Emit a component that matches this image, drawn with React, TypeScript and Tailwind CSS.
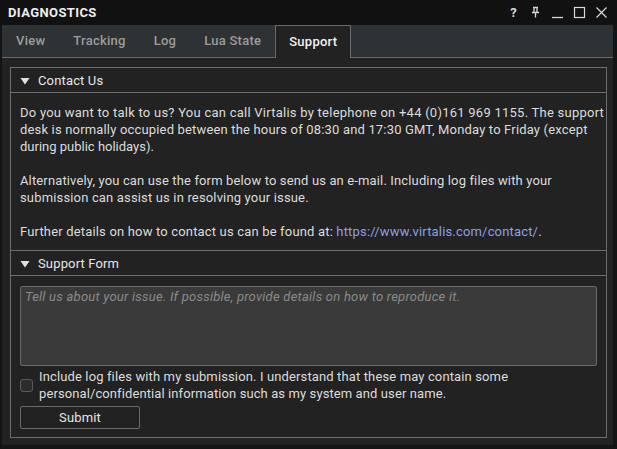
import React from "react";

function TitleIcons() {
  return (
    <div className="flex items-center gap-[9px] text-[#d8d8d8]">
      <span className="w-[13px] text-center font-bold text-[13px] leading-none">?</span>
      <svg width="13" height="13" viewBox="0 0 13 13" fill="none" stroke="#d8d8d8" strokeWidth="1.3">
        <path d="M4 1.5h5M5 1.5v5M8 1.5v5M3 6.5h7M6.5 6.5v5" />
      </svg>
      <svg width="13" height="13" viewBox="0 0 13 13" fill="none" stroke="#d8d8d8" strokeWidth="1.3">
        <path d="M1 11.5h11" />
      </svg>
      <svg width="13" height="13" viewBox="0 0 13 13" fill="none" stroke="#d8d8d8" strokeWidth="1.2">
        <rect x="1.5" y="1.5" width="10" height="10" />
      </svg>
      <svg width="13" height="13" viewBox="0 0 13 13" fill="none" stroke="#d8d8d8" strokeWidth="1.2">
        <path d="M1.5 1.5l10 10M11.5 1.5l-10 10" />
      </svg>
    </div>
  );
}

function Triangle() {
  return (
    <svg width="10" height="8" viewBox="0 0 10 8">
      <path d="M0.5 1h9L5 7.5z" fill="#e0e0e0" />
    </svg>
  );
}

export default function App() {
  const tabs = ["View", "Tracking", "Log", "Lua State"];
  return (
    <div className="w-[617px] h-[449px] bg-[#141414] flex flex-col font-['Roboto',sans-serif] text-[13px] tracking-[0.15px] text-[#dcdcdc] overflow-hidden">
      <div className="h-[25px] shrink-0 flex items-center justify-between pl-[8px] pr-[9px] bg-[#111111]">
        <span className="font-bold text-[13px] tracking-[0.4px] text-[#eeeeee]">DIAGNOSTICS</span>
        <TitleIcons />
      </div>
      <div className="flex-1 flex flex-col pl-[2px] pr-[4px] pb-[4px]">
        <div className="h-[33px] shrink-0 flex items-end bg-[#2e3234] border-b border-[#6a6a6a] tracking-[0.25px]">
          {tabs.map((t) => (
            <div key={t} className="h-[32px] flex items-center px-[14px] font-medium text-[#9c9c9c]">
              {t}
            </div>
          ))}
          <div className="h-[33px] -mb-[1px] flex items-center px-[13px] font-medium text-[#f2f2f2] bg-[#222222] border border-b-0 border-[#6a6a6a]">
            Support
          </div>
        </div>
        <div className="flex-1 bg-[#222222] pt-[9px] pl-[8px] pr-[6px] pb-[7px] flex flex-col">
          <div className="flex-1 border border-[#6e6e6e] flex flex-col">
            <div className="h-[25px] shrink-0 flex items-center gap-[8px] pl-[9px] pt-[2px] border-b border-[#6e6e6e]">
              <Triangle />
              <span className="text-[#e6e6e6]">Contact Us</span>
            </div>
            <div className="pl-[9px] pr-[2px] pt-[11px] pb-[10px] leading-[17px] whitespace-nowrap">
              <div className="tracking-[0.245px]">
                Do you want to talk to us? You can call Virtalis by telephone on +44 (0)161 969 1155. The support
              </div>
              <div className="tracking-[0.17px]">
                desk is normally occupied between the hours of 08:30 and 17:30 GMT, Monday to Friday (except
              </div>
              <div className="tracking-[0px]">during public holidays).</div>
              <div className="mt-[17px] tracking-[0.14px]">
                Alternatively, you can use the form below to send us an e-mail. Including log files with your
              </div>
              <div className="tracking-[0.16px]">submission can assist us in resolving your issue.</div>
              <div className="mt-[17px] tracking-[0.17px]">
                Further details on how to contact us can be found at:{" "}
                <span className="text-[#8aa0e4]">https://www.virtalis.com/contact/</span>.
              </div>
            </div>
            <div className="h-[26px] shrink-0 flex items-center gap-[8px] pl-[9px] pt-[2px] border-t border-b border-[#6e6e6e]">
              <Triangle />
              <span className="text-[#e6e6e6]">Support Form</span>
            </div>
            <div className="px-[9px] pt-[10px] flex flex-col">
              <div className="h-[80px] w-[577px] bg-[#3a3a3a] border border-[#6a6a6a] rounded-[2px] px-[4px] pt-[1px] italic text-[#8a8a8a] leading-[17px] tracking-[0.24px] whitespace-nowrap">
                Tell us about your issue. If possible, provide details on how to reproduce it.
              </div>
              <div className="flex items-center gap-[6px] mt-[2px] leading-[17px] whitespace-nowrap">
                <div className="w-[13px] h-[13px] shrink-0 rounded-[3px] border border-[#5a5a5a] bg-[#2c2c2c]" />
                <div>
                  <div className="tracking-[0.13px]">
                    Include log files with my submission. I understand that these may contain some
                  </div>
                  <div className="tracking-[0.1px]">
                    personal/confidential information such as my system and user name.
                  </div>
                </div>
              </div>
              <div className="mt-[4px] w-[120px] h-[23px] border border-[#6a6a6a] rounded-[2px] flex items-center justify-center text-[#e6e6e6]">
                Submit
              </div>
            </div>
          </div>
        </div>
      </div>
    </div>
  );
}
